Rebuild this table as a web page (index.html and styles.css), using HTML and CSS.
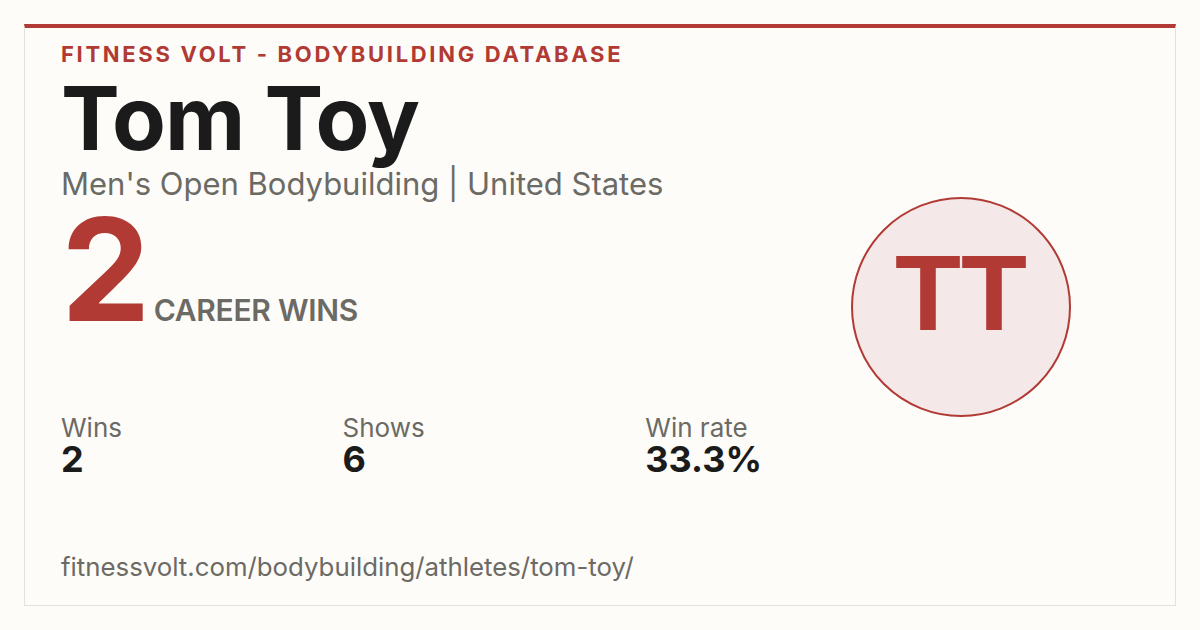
FILE: index.html
```html
<!DOCTYPE html>
<html lang="en">
<head>
<meta charset="utf-8">
<title>Tom Toy - Fitness Volt</title>
<link rel="stylesheet" href="styles.css">
</head>
<body>
<div class="card">
  <div class="brand">FITNESS VOLT - BODYBUILDING DATABASE</div>
  <div class="main">
    <div class="left">
      <h1 class="name">Tom Toy</h1>
      <div class="sub">Men's Open Bodybuilding | United States</div>
      <div class="hero">
        <span class="hero-num">2</span>
        <span class="hero-label">CAREER WINS</span>
      </div>
      <div class="stats">
        <div class="stat"><div class="stat-label">Wins</div><div class="stat-value">2</div></div>
        <div class="stat"><div class="stat-label">Shows</div><div class="stat-value">6</div></div>
        <div class="stat"><div class="stat-label">Win rate</div><div class="stat-value">33.3%</div></div>
      </div>
    </div>
    <div class="right">
      <div class="avatar"><span class="initials">TT</span></div>
    </div>
  </div>
  <div class="url">fitnessvolt.com/bodybuilding/athletes/tom-toy/</div>
</div>
</body>
</html>
```
FILE: styles.css
```css
* { box-sizing: border-box; }
html, body { margin: 0; padding: 0; }
body {
  width: 1200px;
  height: 630px;
  background: #fdfcf8;
  font-family: Inter, "Liberation Sans", sans-serif;
  padding: 24px;
  overflow: hidden;
}
.card {
  height: 582px;
  border: 1px solid #e3e1dc;
  border-top: 4px solid #b13a34;
  background: #fdfcf8;
  padding: 11px 36px 0 36px;
  display: flex;
  flex-direction: column;
}
.brand {
  color: #b13a34;
  font-weight: 700;
  font-size: 22px;
  letter-spacing: 0.122em;
  line-height: 30px;
}
.main {
  display: flex;
  align-items: flex-start;
}
.left {
  width: 701px;
  display: flex;
  flex-direction: column;
}
.name {
  margin: 0;
  font-size: 88px;
  font-weight: 700;
  color: #1b1b1b;
  line-height: 98px;
  letter-spacing: -0.01em;
}
.sub {
  font-size: 31px;
  color: #6b6a65;
  line-height: 34px;
}
.hero {
  display: flex;
  align-items: baseline;
  gap: 9px;
  margin-top: 1px;
}
.hero-num {
  font-size: 142px;
  font-weight: 700;
  color: #b13a34;
  line-height: 134px;
  letter-spacing: -0.04em;
}
.hero-label {
  font-size: 30px;
  font-weight: 600;
  color: #6b6a65;
  letter-spacing: -0.01em;
}
.stats {
  margin-top: 78px;
  display: flex;
  justify-content: space-between;
}
.stat-label {
  font-size: 26px;
  color: #6b6a65;
  line-height: 27px;
}
.stat-value {
  font-size: 36px;
  font-weight: 700;
  color: #1b1b1b;
  line-height: 36px;
}
.right {
  flex: 1;
  display: flex;
  justify-content: flex-start;
  padding-left: 89px;
  padding-top: 128px;
}
.avatar {
  width: 220px;
  height: 220px;
  border-radius: 50%;
  border: 2px solid #b13a34;
  background: #f4e8e8;
  display: flex;
  align-items: center;
  justify-content: center;
}
.initials {
  font-family: "Liberation Sans", Arial, sans-serif;
  font-weight: 700;
  font-size: 108px;
  color: #b13a34;
  line-height: 1;
  padding-bottom: 28px;
}
.url {
  margin-top: auto;
  margin-bottom: 23px;
  font-size: 25.8px;
  color: #6b6a65;
  line-height: 30px;
}
```
